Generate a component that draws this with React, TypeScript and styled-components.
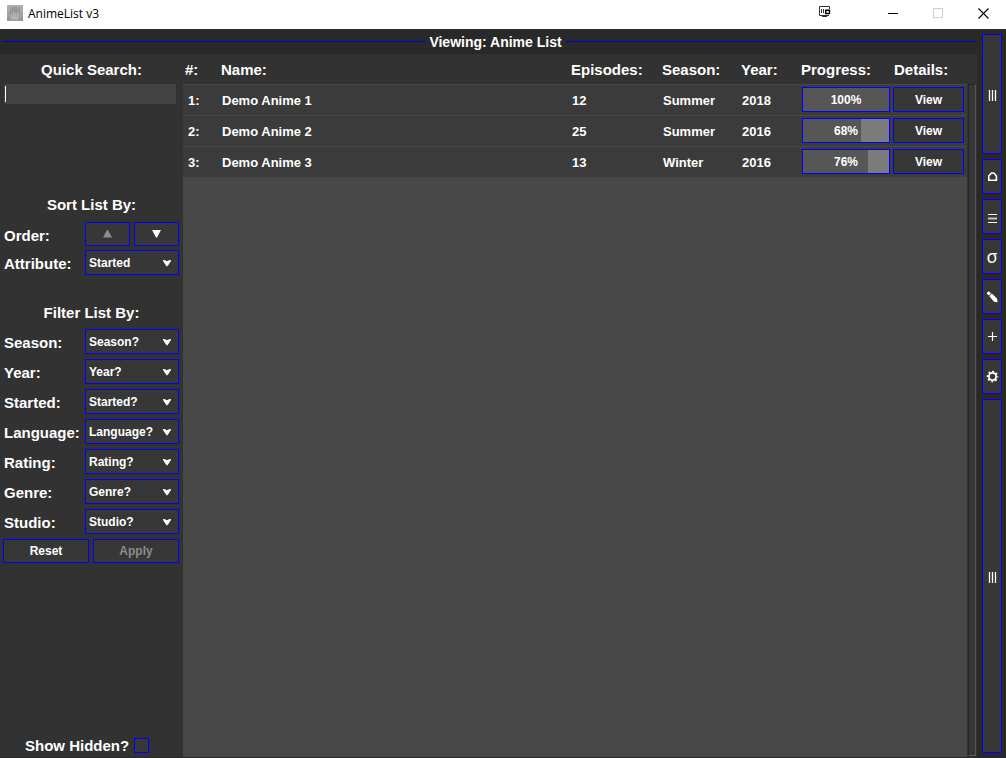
import React, { useState } from "react";
import styled, { createGlobalStyle } from "styled-components";

const c = {
  bar: "#292929",
  panel: "#323232",
  button: "#373737",
  row: "#3b3b3b",
  list: "#484848",
  field: "#424242",
  blue: "#0000ff",
  text: "#ffffff",
  muted: "#8c8c8c",
};

const GlobalStyle = createGlobalStyle`
  * { box-sizing: border-box; }
  body {
    margin: 0;
    background: ${c.bar};
    color: ${c.text};
    font: bold 15px "Liberation Sans", Arial, sans-serif;
  }
  button, input, select { font: inherit; color: inherit; margin: 0; }
  svg { display: block; flex: none; }
`;

const Window = styled.div`
  min-height: 100vh;
  display: flex;
  flex-direction: column;
`;

const TitleBar = styled.header`
  height: 29px;
  display: flex;
  align-items: center;
  padding-left: 7px;
  background: #fff;
  color: #000;
`;

const AppLogo = styled.div`
  align-self: flex-start;
  padding-top: 5px;
`;

const AppName = styled.h1`
  flex: 1;
  margin: 0 0 0 5px;
  padding-bottom: 1px;
  font: 12px/16px "Open Sans", "Noto Sans", sans-serif;
`;

const WindowButton = styled.button<{ $status?: boolean }>`
  width: ${(p) => (p.$status ? 24 : 45)}px;
  height: 29px;
  margin-right: ${(p) => (p.$status ? 34 : 0)}px;
  padding: 0 0 ${(p) => (p.$status ? 5 : 3)}px;
  border: 0;
  background: none;
  display: flex;
  align-items: center;
  justify-content: center;
`;

const Body = styled.div`
  flex: 1;
  display: flex;
`;

const Content = styled.div`
  flex: 1;
  min-width: 0;
  display: flex;
  flex-direction: column;
  padding-bottom: 1px;
`;

const Heading = styled.h2`
  height: 25px;
  margin: 0;
  padding: 0 2px;
  display: grid;
  grid-template-columns: 422fr auto 408fr;
  align-items: center;
  gap: 4px;
  font-size: 14px;
  &::before, &::after {
    content: "";
    height: 1px;
    background: #0000d8;
  }
`;

const Panes = styled.main`
  flex: 1;
  display: grid;
  grid-template-columns: 183px 1fr 10px;
  background: ${c.panel};
`;

const Sidebar = styled.form`
  display: flex;
  flex-direction: column;
  padding: 0 4px 4px 3px;
`;

const SectionTitle = styled.label`
  display: block;
  padding: 6px 0 1px 1px;
  line-height: 20px;
  text-align: center;
`;

const SearchField = styled.div`
  position: relative;
  height: 20px;
  margin: 3px 3px 0 1px;
`;

const SearchInput = styled.input`
  display: block;
  width: 100%;
  height: 20px;
  padding: 0 3px;
  border: 0;
  outline: 0;
  background: ${c.field};
  font-size: 13px;
`;

const Caret = styled.span`
  position: absolute;
  left: 1px;
  top: 2px;
  width: 1px;
  height: 16px;
  background: #fff;
`;

const SortGroup = styled.section`
  display: grid;
  row-gap: 4px;
  margin-top: 85px;
  > :first-child { margin-bottom: 2px; }
`;

const FilterGroup = styled.section`
  display: grid;
  row-gap: 5px;
  margin-top: 22px;
`;

const FieldRow = styled.div`
  display: grid;
  grid-template-columns: 82px 1fr;
  align-items: center;
`;

const FieldLabel = styled.label`
  padding: 2px 0 0 1px;
`;

const Pair = styled.div`
  display: grid;
  grid-template-columns: 1fr 1fr;
  gap: 4px;
`;

const Button = styled.button`
  height: 24px;
  padding: 0;
  display: flex;
  align-items: center;
  justify-content: center;
  border: 1px solid ${c.blue};
  background: ${c.button};
  font-size: 12px;
  &:disabled { color: ${c.muted}; }
`;

const SelectBox = styled.div`
  position: relative;
  height: 25px;
  svg {
    position: absolute;
    right: 8px;
    top: 10px;
    pointer-events: none;
  }
`;

const StyledSelect = styled.select`
  appearance: none;
  display: block;
  width: 100%;
  height: 25px;
  padding: 0 0 0 3px;
  border: 1px solid ${c.blue};
  border-radius: 0;
  outline: 0;
  background: ${c.button};
  font-size: 12px;
`;

const HiddenToggle = styled.label`
  display: flex;
  align-items: center;
  gap: 5px;
  height: 15px;
  margin-top: auto;
  padding-left: 22px;
`;

const CheckBox = styled.input`
  appearance: none;
  width: 15px;
  height: 15px;
  border: 1px solid ${c.blue};
  background: ${c.button};
  &:checked { background: ${c.blue}; }
`;

const ListPane = styled.div`
  background: ${c.list};
`;

const Table = styled.table`
  width: 100%;
  table-layout: fixed;
  border-collapse: collapse;
  text-align: left;
`;

const Col = styled.col<{ $width?: number }>`
  width: ${(p) => (p.$width ? `${p.$width}px` : "auto")};
`;

const HeadCell = styled.th`
  height: 30px;
  padding: 1px 0 0 2px;
  background: ${c.panel};
`;

const Row = styled.tr`
  height: 31px;
  background: linear-gradient(${c.list} 1px, ${c.row} 1px);
`;

const Cell = styled.td<{ $control?: number }>`
  padding: ${(p) => (p.$control ? `3px 3px 3px ${p.$control}px` : "2px 0 0 3px")};
  font-size: 13px;
  &:first-child { padding-left: 5px; }
`;

const Progress = styled.div`
  position: relative;
  width: 88px;
  height: 25px;
  border: 1px solid ${c.blue};
  background: #7b7b7b;
  font-size: 12px;
`;

const ProgressFill = styled.div`
  height: 100%;
  background: #565656;
`;

const ProgressText = styled.span`
  position: absolute;
  inset: 0;
  line-height: 25px;
  text-align: center;
`;

const ViewButton = styled(Button)`
  width: 71px;
  height: 25px;
`;

const ScrollTrack = styled.div`
  margin: 30px 1px 1px;
  border: 1px solid;
  border-color: #252525 #575757 #575757 #252525;
  background: #363636;
`;

const Toolbar = styled.nav`
  width: 29px;
  padding: 5px 4px 5px 5px;
  display: flex;
  flex-direction: column;
  gap: 5px;
`;

const ToolButton = styled(Button)<{ $size?: "tall" | "fill" }>`
  width: 20px;
  height: ${(p) => (p.$size === "tall" ? "120px" : p.$size === "fill" ? "auto" : "35px")};
  flex: ${(p) => (p.$size === "fill" ? "1" : "none")};
`;

const Sigma = styled.span`
  font: 18px/21px "Noto Sans", sans-serif;
`;

const ICON = { width: 14, height: 15, viewBox: "0 0 14 15", fill: "none", stroke: "currentColor", "aria-hidden": true } as const;

const BarsIcon = () => (
  <svg {...ICON} height={16} viewBox="0 0 14 16"><path d="M4.5 4v11M7.5 4v11M10.5 4v11" strokeWidth="1.3" /></svg>
);
const HomeIcon = () => (
  <svg {...ICON} strokeWidth="1.6"><path d="M3.8 11.3V7L6.4 4H8.8L11.4 7V11.3Z" /></svg>
);
const ListIcon = () => (
  <svg {...ICON}><path d="M3 5.5h9M3 13.5h9" /><path d="M3 9.5h9" strokeWidth="2" stroke="#c4c4c4" /></svg>
);
const PencilIcon = () => (
  <svg {...ICON} stroke="none" fill="currentColor">
    <path d="M3.6 2.6L6 4.1L4.1 6.6L2 4.9Q1.6 2.8 3.6 2.6ZM6.8 4.5L12 9.4L12.6 13.2L9 12.8L4.4 7.2Z" />
  </svg>
);
const PlusIcon = () => (
  <svg {...ICON}><path d="M3 7.5h9M7.5 3v9" strokeWidth="1.2" /></svg>
);
const GearIcon = () => (
  <svg {...ICON}>
    <circle cx="7.5" cy="7.5" r="3.6" strokeWidth="1.8" />
    <circle cx="7.5" cy="7.5" r="4.9" strokeWidth="1.8" strokeDasharray="1.9 1.95" strokeDashoffset="0.95" />
  </svg>
);
const DropArrow = () => (
  <svg width="8" height="7" viewBox="0 0 8 7" fill="#fff" aria-hidden="true">
    <path d="M0 0L2 .3L4 1.2L6 .3L8 0L8 1L5 5.4L4 6.4L3 5.4L0 1Z" />
  </svg>
);
const Triangle = ({ up }: { up?: boolean }) => (
  <svg width="9" height="8" viewBox="0 0 9 8" fill="currentColor" aria-hidden="true">
    <path d={up ? "M4 0H5L9 7.5H0Z" : "M0 0H9L5 7.5H4Z"} />
  </svg>
);

const AppIcon = () => (
  <svg width="16" height="16" viewBox="0 0 16 16" aria-hidden="true">
    <path d="M0 0h16v16H0z" fill="#a2a2a2" />
    <path d="M0 0h16v2H0zM0 2h3v4H0zM13 2h3v5h-3z" fill="#adadad" />
    <path d="M3 4Q8 0 13 4V9H3Z" fill="#989898" />
    <path d="M4 9h1v4H4zM6 7h1v6H6zM8 8h1v6H8zM10 7h1v6h-1zM5 12h6v2H5z" fill="#b8b8b8" />
    <path d="M0 12h3v4H0zM12 13h4v3h-4z" fill="#969696" />
  </svg>
);

type FieldProps = { id: string; label: string; options: string[] };

const SelectField = ({ id, label, options }: FieldProps) => (
  <FieldRow>
    <FieldLabel htmlFor={id}>{label}:</FieldLabel>
    <SelectBox>
      <StyledSelect id={id}>
        {options.map((o) => <option key={o}>{o}</option>)}
      </StyledSelect>
      <DropArrow />
    </SelectBox>
  </FieldRow>
);

const FILTERS = ["Season", "Year", "Started", "Language", "Rating", "Genre", "Studio"];

const COLUMNS: { title: string; width?: number }[] = [
  { title: "#", width: 36 },
  { title: "Name" },
  { title: "Episodes", width: 91 },
  { title: "Season", width: 79 },
  { title: "Year", width: 60 },
  { title: "Progress", width: 93 },
  { title: "Details", width: 75 },
];

const ANIME = [
  { name: "Demo Anime 1", episodes: 12, season: "Summer", year: 2018, progress: 100 },
  { name: "Demo Anime 2", episodes: 25, season: "Summer", year: 2016, progress: 68 },
  { name: "Demo Anime 3", episodes: 13, season: "Winter", year: 2016, progress: 76 },
];

export default function App() {
  const [query, setQuery] = useState("");
  return (
    <Window>
      <GlobalStyle />
      <TitleBar>
        <AppLogo><AppIcon /></AppLogo>
        <AppName>AnimeList v3</AppName>
        <WindowButton $status aria-label="Display">
          <svg width="12" height="12" viewBox="0 0 12 12" fill="none" stroke="#333" aria-hidden="true">
            <path d="M10.5 3V.5H.5V9.5H10M2.5 3v4M4.5 3v4M3 10.5h5" />
            <path d="M6.7 4.2h3.8v3.3h-3.8z" stroke="#000" strokeWidth="1.4" />
          </svg>
        </WindowButton>
        <WindowButton aria-label="Minimize">
          <svg width="11" height="11" viewBox="0 0 11 11" stroke="#000" aria-hidden="true"><path d="M0 5.5h10" /></svg>
        </WindowButton>
        <WindowButton aria-label="Maximize" disabled>
          <svg width="11" height="11" viewBox="0 0 11 11" fill="none" stroke="#ccc" aria-hidden="true"><path d="M.5 .5h9v9h-9z" /></svg>
        </WindowButton>
        <WindowButton aria-label="Close">
          <svg width="11" height="11" viewBox="0 0 11 11" stroke="#000" strokeWidth="1.1" aria-hidden="true"><path d="M.5 .5l10 10M10.5 .5l-10 10" /></svg>
        </WindowButton>
      </TitleBar>
      <Body>
        <Content>
          <Heading>Viewing: Anime List</Heading>
          <Panes>
            <Sidebar onSubmit={(e) => e.preventDefault()}>
              <SectionTitle htmlFor="search">Quick Search:</SectionTitle>
              <SearchField>
                <SearchInput id="search" value={query} onChange={(e) => setQuery(e.target.value)} />
                {query === "" && <Caret />}
              </SearchField>
              <SortGroup>
                <SectionTitle as="div">Sort List By:</SectionTitle>
                <FieldRow role="group" aria-labelledby="order">
                  <FieldLabel as="span" id="order">Order:</FieldLabel>
                  <Pair>
                    <Button type="button" aria-label="Ascending" disabled><Triangle up /></Button>
                    <Button type="button" aria-label="Descending"><Triangle /></Button>
                  </Pair>
                </FieldRow>
                <SelectField id="attribute" label="Attribute" options={["Started", "Name", "Year"]} />
              </SortGroup>
              <FilterGroup>
                <SectionTitle as="div">Filter List By:</SectionTitle>
                {FILTERS.map((f) => (
                  <SelectField key={f} id={`filter-${f}`} label={f} options={[`${f}?`]} />
                ))}
                <Pair>
                  <Button type="reset">Reset</Button>
                  <Button type="submit" disabled>Apply</Button>
                </Pair>
              </FilterGroup>
              <HiddenToggle>
                Show Hidden?
                <CheckBox type="checkbox" />
              </HiddenToggle>
            </Sidebar>
            <ListPane>
              <Table>
                <colgroup>
                  {COLUMNS.map((col) => <Col key={col.title} $width={col.width} />)}
                </colgroup>
                <thead>
                  <tr>
                    {COLUMNS.map((col) => <HeadCell key={col.title} scope="col">{col.title}:</HeadCell>)}
                  </tr>
                </thead>
                <tbody>
                  {ANIME.map((a, i) => (
                    <Row key={a.name}>
                      <Cell>{i + 1}:</Cell>
                      <Cell>{a.name}</Cell>
                      <Cell>{a.episodes}</Cell>
                      <Cell>{a.season}</Cell>
                      <Cell>{a.year}</Cell>
                      <Cell $control={3}>
                        <Progress role="progressbar" aria-label={a.name} aria-valuenow={a.progress}>
                          <ProgressFill style={{ width: `${a.progress}%` }} />
                          <ProgressText>{a.progress}%</ProgressText>
                        </Progress>
                      </Cell>
                      <Cell $control={1}><ViewButton type="button">View</ViewButton></Cell>
                    </Row>
                  ))}
                </tbody>
              </Table>
            </ListPane>
            <ScrollTrack />
          </Panes>
        </Content>
        <Toolbar>
          <ToolButton $size="tall" aria-label="Top handle"><BarsIcon /></ToolButton>
          <ToolButton aria-label="Home"><HomeIcon /></ToolButton>
          <ToolButton aria-label="List"><ListIcon /></ToolButton>
          <ToolButton aria-label="Statistics"><Sigma>σ</Sigma></ToolButton>
          <ToolButton aria-label="Edit"><PencilIcon /></ToolButton>
          <ToolButton aria-label="Add"><PlusIcon /></ToolButton>
          <ToolButton aria-label="Settings"><GearIcon /></ToolButton>
          <ToolButton $size="fill" aria-label="Bottom handle"><BarsIcon /></ToolButton>
        </Toolbar>
      </Body>
    </Window>
  );
}
